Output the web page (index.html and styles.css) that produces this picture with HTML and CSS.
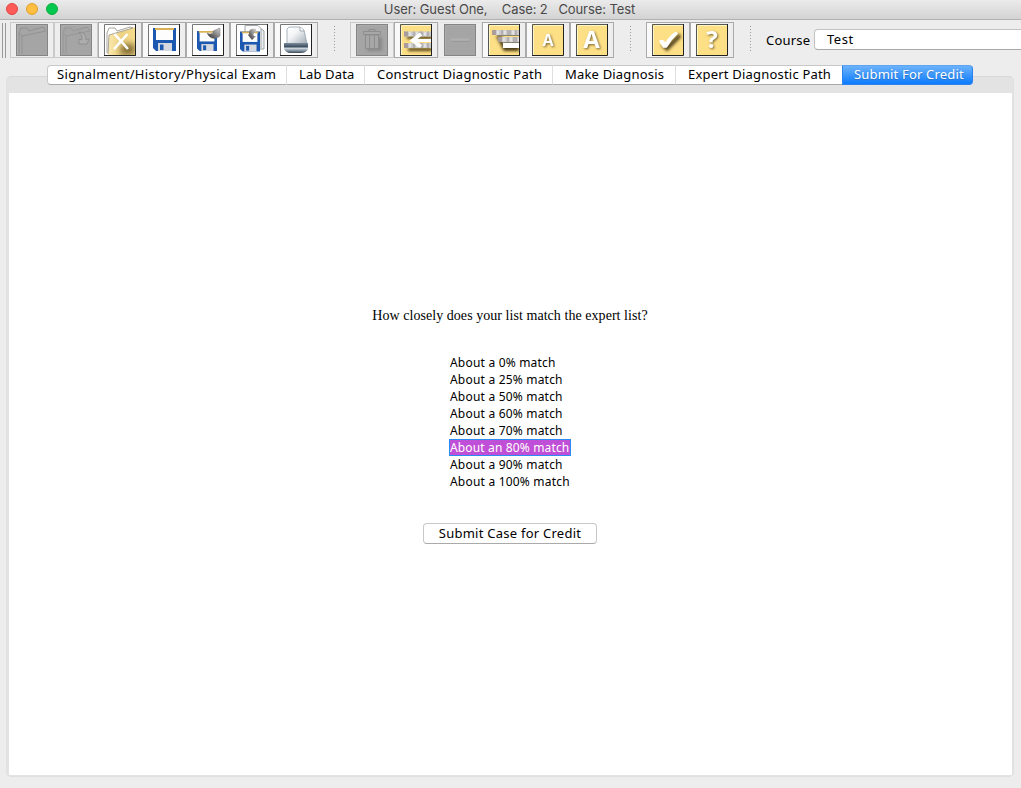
FILE: index.html
```html
<!DOCTYPE html>
<html lang="en">
<head>
<meta charset="utf-8">
<title>User: Guest One, Case: 2 Course: Test</title>
<link rel="stylesheet" href="styles.css">
</head>
<body>
<svg class="defs" width="0" height="0" aria-hidden="true">
  <defs>
    <linearGradient id="gold" x1="0" y1="0" x2="1" y2="0"><stop offset="0" stop-color="#fbe9ae"/><stop offset=".5" stop-color="#edd182"/><stop offset="1" stop-color="#f6dc8e"/></linearGradient>
    <linearGradient id="paper" x1="0" y1="0" x2="1" y2="1"><stop offset="0" stop-color="#fff"/><stop offset=".4" stop-color="#f2f4f6"/><stop offset="1" stop-color="#9fabb5"/></linearGradient>
    <linearGradient id="steel" x1="0" y1="0" x2="0" y2="1"><stop offset="0" stop-color="#7b8c9b"/><stop offset=".35" stop-color="#405365"/><stop offset=".55" stop-color="#c8d2da"/><stop offset=".75" stop-color="#8797a5"/><stop offset="1" stop-color="#3f4a54"/></linearGradient>
    <linearGradient id="arrow" x1="0" y1="1" x2="1" y2="0"><stop offset="0" stop-color="#222"/><stop offset=".45" stop-color="#777"/><stop offset="1" stop-color="#d4d4d4"/></linearGradient>
    <filter id="soft" x="-50%" y="-50%" width="200%" height="200%"><feGaussianBlur stdDeviation="1.6"/></filter>
    <filter id="haze" x="-50%" y="-50%" width="200%" height="200%"><feGaussianBlur stdDeviation="3"/></filter>
    <g id="yellow"><rect width="32" height="32" fill="#fddf86"/><path d="M1.500 31V4q0-2.500 2.500-2.500h27" fill="none" stroke="#fff3c8"/><path d="M.5 32V.5H32" fill="none" stroke="#555850"/><path d="M31.500 0v31.500H0" fill="none" stroke="#222"/></g>
    <g id="white"><rect width="32" height="32" fill="#fff"/><path d="M.5 32V.5H32" fill="none" stroke="#777"/><path d="M31.500 0v31.500H0" fill="none" stroke="#222"/></g>
    <g id="gray"><rect width="32" height="32" fill="#a5a5a5"/><rect x=".5" y=".5" width="31" height="31" fill="none" stroke="#858585"/><path d="M1.500 31V4q0-2.500 2.500-2.500h27" fill="none" stroke="#acacac"/></g>
    <g id="disk"><path d="M0 0h23v23H3l-3-3z" fill="#1d58b0"/><path d="M3 1h17v11H3z" fill="#fdfdfd"/><path d="M2 0h19v2H2z" fill="#d9b256"/><path d="M5 15h14v8H5z" fill="#d5d8de"/><path d="M7 16.500h3.500V22H7z" fill="#1d58b0"/></g>
    <g id="bars"><rect width="32" height="5" fill="#cbcbcb"/><path d="M0 0h4v5H0z" fill="#a89c9c"/><path d="M9 0h2v5H9zM15 0h4v5h-4zM23 0h2v5h-2z" fill="#b4b0b0"/><path d="M6 .5v4M13 .5v4M21 .5v4" stroke="#e2e2e2" stroke-width="2"/></g>
  </defs>
</svg>

<header class="titlebar">
  <div class="lights"><i class="light red"></i><i class="light amber"></i><i class="light green"></i></div>
  <h1 class="title">User: Guest One,&nbsp;&nbsp;&nbsp; Case: 2&nbsp;&nbsp; Course: Test</h1>
</header>

<div class="toolbar">
  <div class="grip"></div>
  <div class="group">
    <button class="tool off" aria-label="New case"><svg class="icon" viewBox="0 0 32 32"><use href="#gray"/><path d="M3 30V9l2-5h6l2 3 14-4 3 4L6 12M3 9l3 3v18" fill="none" stroke="#929292"/></svg></button>
    <button class="tool off" aria-label="Open case"><svg class="icon" viewBox="0 0 32 32"><use href="#gray"/><path d="M3 30V9l2-5h6l2 3 14-4 3 4L6 12M3 9l3 3v18" fill="none" stroke="#969696"/><path d="M19 8q7 0 7 8l3-1-2 5h-8v-5l3 1q1-5-3-8z" fill="#adadad" stroke="#8a8a8a" stroke-width=".8"/></svg></button>
    <button class="tool" aria-label="Close case"><svg class="icon" viewBox="0 0 32 32"><use href="#white"/><path d="M5 11 31 3v28H4z" fill="url(#gold)"/><path d="M18 20h13v11H16z" fill="#5d4a18" opacity=".75" filter="url(#haze)"/><path d="M3 29V9l2-5h6l2 3 13-4 3 1L5 11 4 30" fill="none" stroke="#aaa69a"/><path d="m10.500 10 13.500 15M23.500 10 10 25" stroke="#fff" stroke-width="2.600"/><path d="M31.500 0v31.500H0" fill="none" stroke="#222"/></svg></button>
    <button class="tool" aria-label="Save"><svg class="icon" viewBox="0 0 32 32"><use href="#white"/><use href="#disk" x="5" y="4"/></svg></button>
    <button class="tool" aria-label="Save as"><svg class="icon" viewBox="0 0 32 32"><use href="#white"/><use href="#disk" transform="translate(5 7) scale(.87)"/><path d="M15 9q3 2 6 0V7l7-3v8l-3 2q-7 2-10-5z" fill="url(#arrow)" stroke="#777" stroke-width=".5"/></svg></button>
    <button class="tool" aria-label="Save copy"><svg class="icon" viewBox="0 0 32 32"><use href="#white"/><path d="M11 4h13l4 3v18H13z" fill="#edf0f1" stroke="#9da3a6"/><path d="M9 9V1.500h13l3 3V24" fill="#fafafa" stroke="#a3a8aa"/><use href="#disk" transform="translate(4 7.500) scale(.87)"/><path d="M20 5q-8-1-7 5l-1 1 4 5 4-4h-2q-2-3 2-4z" fill="url(#arrow)"/></svg></button>
    <button class="tool" aria-label="Print"><svg class="icon" viewBox="0 0 32 32"><use href="#white"/><path d="M7 20V5l2-2h11l4 3 3 14z" fill="url(#paper)" stroke="#8797a3" stroke-width=".7"/><path d="M20 3v4h4" fill="#fff" stroke="#879199" stroke-width=".7"/><path d="M4 19h24v6q-2 4-7 4H9q-5-2-5-5z" fill="url(#steel)"/></svg></button>
  </div>
  <div class="divider"></div>
  <div class="group">
    <button class="tool off" aria-label="Delete"><svg class="icon" viewBox="0 0 32 32"><use href="#gray"/><path d="M11 13h15v14H11z" fill="#888" filter="url(#soft)"/><path d="M7.500 7.500h17v3h-17zM13 7.500v-2h6v2M9.500 11h13v13.500h-13zM13.500 11v13.500M18.500 11v13.500" fill="#a7a7a7" stroke="#8d8d8d"/></svg></button>
    <button class="tool" aria-label="Insert item"><svg class="icon" viewBox="0 0 32 32"><use href="#yellow"/><path d="M7 12h25v3H7zM8 24h24v3H8z" fill="#4b3e18" filter="url(#soft)"/><use href="#bars" x="4" y="7.500"/><use href="#bars" x="4" y="19"/><path d="M12 16.500h20" fill="none" stroke="#fff" stroke-width="3"/><path d="m21 10-8.500 6.500 8.500 6" fill="none" stroke="#fff" stroke-width="3.500"/><path d="M31.500 0v32" stroke="#222"/></svg></button>
    <button class="tool plain" aria-label="Remove item"><svg class="icon" viewBox="0 0 32 32"><use href="#gray"/><path d="M7 15.500h18" stroke="#b0b0b0" stroke-width="2"/><path d="M8 17.500h18" stroke="#9a9a9a"/></svg></button>
    <button class="tool" aria-label="Indent item"><svg class="icon" viewBox="0 0 32 32"><use href="#yellow"/><path d="M8 12h6l3 9h14v6H16z" fill="#4b3e18" filter="url(#soft)"/><use href="#bars" x="4" y="6"/><path d="M9 11.500h23" stroke="#8a8370"/><use href="#bars" x="10" y="13"/><path d="M14 18.500h18" stroke="#8a8370"/><path d="M15 19h17v5H15z" fill="#fff"/><path d="M31.500 0v32" stroke="#222"/></svg></button>
    <button class="tool" aria-label="Smaller text"><svg class="icon" viewBox="0 0 32 32"><use href="#yellow"/><text class="glyph small" x="16" y="22">A</text></svg></button>
    <button class="tool" aria-label="Larger text"><svg class="icon" viewBox="0 0 32 32"><use href="#yellow"/><text class="glyph large" x="15.500" y="24">A</text></svg></button>
  </div>
  <div class="divider"></div>
  <div class="group">
    <button class="tool" aria-label="Check"><svg class="icon" viewBox="0 0 32 32"><use href="#yellow"/><path d="m11 22 4 4L28 13l-1-2-12 11z" fill="#4b3d14" stroke="#5b4b20" stroke-width="2" filter="url(#soft)"/><path d="m8 17 2.500-.5 3 3Q18 12 24 8.500l1 1Q19 15 14.500 23h-3z" fill="#fff" stroke="#fff" stroke-width="1.500" stroke-linejoin="round"/></svg></button>
    <button class="tool" aria-label="Help"><svg class="icon" viewBox="0 0 32 32"><use href="#yellow"/><text class="glyph help" x="16" y="24">?</text></svg></button>
  </div>
  <div class="divider"></div>
  <span class="course-label">Course</span>
  <div class="course-select"><span>Test</span></div>
</div>

<main class="workspace">
  <nav class="tabs">
    <a class="tab t1">Signalment/History/Physical Exam</a>
    <a class="tab t2">Lab Data</a>
    <a class="tab t3">Construct Diagnostic Path</a>
    <a class="tab t4">Make Diagnosis</a>
    <a class="tab t5">Expert Diagnostic Path</a>
    <a class="tab t6 active">Submit For Credit</a>
  </nav>
  <section class="panel">
    <div class="page">
      <p class="question">How closely does your list match the expert list?</p>
      <ul class="choices">
        <li>About a 0% match</li>
        <li>About a 25% match</li>
        <li>About a 50% match</li>
        <li>About a 60% match</li>
        <li>About a 70% match</li>
        <li class="selected">About an 80% match</li>
        <li>About a 90% match</li>
        <li>About a 100% match</li>
      </ul>
      <button class="submit">Submit Case for Credit</button>
    </div>
  </section>
</main>
</body>
</html>
```
FILE: styles.css
```css
* { box-sizing: border-box; }
body {
  margin: 0;
  width: 1021px;
  height: 788px;
  overflow: hidden;
  display: flex;
  flex-direction: column;
  background: #ededed;
  color: #000;
  font: 13px/17px "Noto Sans", sans-serif;
}
button { font: inherit; color: inherit; padding: 0; margin: 0; }
.defs { position: absolute; }

.titlebar {
  flex: none;
  height: 20px;
  display: grid;
  grid-template-columns: 64px 1fr 66px;
  background: linear-gradient(#ebebeb, #d3d3d3);
  border-bottom: 1px solid #b1b1b1;
}
.lights { display: flex; gap: 8px; padding: 3px 0 0 6px; }
.light { width: 12px; height: 12px; border-radius: 50%; border: 1px solid; }
.red { background: #fc5b57; border-color: #e2463f; }
.amber { background: #fdbe41; border-color: #e2a02e; }
.green { background: #06c84f; border-color: #0fae3b; }
.title {
  margin: 0;
  text-align: center;
  font: 13px/19px Inter, sans-serif;
  color: #4a4a4a;
  letter-spacing: -.09px;
}

.toolbar { flex: none; height: 38px; display: flex; align-items: flex-start; padding: 2px 0 0 2px; }
.grip { width: 4px; height: 35px; margin: 1px 4px 0 0; border: solid #999; border-width: 0 1px; }
.group { display: flex; }
.tool {
  width: 44px;
  height: 36px;
  border: 1px solid #aaa;
  background: linear-gradient(90deg, #fafafa, #ededed);
  padding: 1px 5px;
}
.tool.off { border-color: #cacaca; background: #eee; }
.tool.plain { border-color: #e4e4e4; background: none; }
.icon { display: block; width: 32px; height: 32px; }
.glyph {
  fill: #fff;
  text-anchor: middle;
  font-family: "Open Sans", sans-serif;
  font-weight: 700;
  filter: drop-shadow(1px 1px 1px #776534);
}
.small { font-size: 16px; }
.large { font-size: 24px; }
.help { font-size: 24px; }
.divider {
  width: 1px;
  height: 26px;
  margin: 4px 15px 0 16px;
  background: repeating-linear-gradient(#999 0 1px, transparent 1px 3px);
}
.course-label { width: 48px; padding-top: 10px; letter-spacing: .2px; }
.course-select {
  flex: 1;
  height: 21px;
  margin-top: 7px;
  padding: 1px 0 0 12px;
  background: #fff;
  border: 1px solid #c2c2c2;
  border-bottom-color: #a9a9a9;
  border-right: 0;
  border-radius: 4px 0 0 4px;
  letter-spacing: .5px;
}

.workspace { flex: 1; display: flex; flex-direction: column; padding: 7px 7px 11px 6px; }
.tabs { position: relative; z-index: 1; display: flex; height: 20px; margin-left: 41px; align-self: flex-start; flex: none; }
.tab {
  display: block;
  background: #fff;
  border: solid #c8c8c8;
  border-bottom-color: #a9a9a9;
  border-width: 1px 0;
  border-right: 1px solid #dedede;
  line-height: 17px;
  padding-left: 12px;
  white-space: nowrap;
}
.t1 { width: 240px; padding-left: 9px; border-left: 1px solid #c8c8c8; border-radius: 4px 0 0 4px; letter-spacing: .33px; }
.t2 { width: 78px; letter-spacing: .15px; }
.t3 { width: 188px; letter-spacing: .27px; }
.t4 { width: 123px; letter-spacing: .18px; }
.t5 { width: 166px; border-right: 0; letter-spacing: .2px; }
.t6 { width: 131px; padding-left: 11px; letter-spacing: .18px; }
.tab.active {
  color: #fff;
  background: linear-gradient(#6bb2fb, #0c7bfd);
  border: 1px solid #2c83ee;
  border-top-color: #5da4f2;
  border-radius: 0 4px 4px 0;
  text-shadow: 0 1px 1px #2c71bd;
}
.panel {
  flex: 1;
  display: flex;
  margin-top: -9px;
  padding: 16px 1px 1px 2px;
  background: #e3e3e3;
  border: 1px solid #d8d8d8;
  border-color: #d8d8d8 #e0e0e0 #e0e0e0;
  border-radius: 5px;
}
.page { flex: 1; background: #fff; display: flex; flex-direction: column; align-items: center; padding: 214px 1px 0 0; }
.question { margin: 0; font: 14px/18px "Liberation Serif", serif; white-space: nowrap; letter-spacing: .05px; }
.choices { list-style: none; margin: 29px 0 0; padding: 0; width: 122px; font-size: 12px; line-height: 17px; }
.choices li { height: 17px; padding-left: 1px; white-space: nowrap; letter-spacing: .2px; }
.choices .selected { background: #bf4fd6; color: #fff; border: 1px solid #2b8cf5; padding-left: 0; line-height: 15px; letter-spacing: .15px; }
.submit {
  width: 174px;
  height: 21px;
  margin-top: 33px;
  background: #fff;
  border: 1px solid #c8c8c8;
  border-bottom-color: #aaa;
  border-radius: 4px;
  line-height: 17px;
  letter-spacing: .25px;
}
```
